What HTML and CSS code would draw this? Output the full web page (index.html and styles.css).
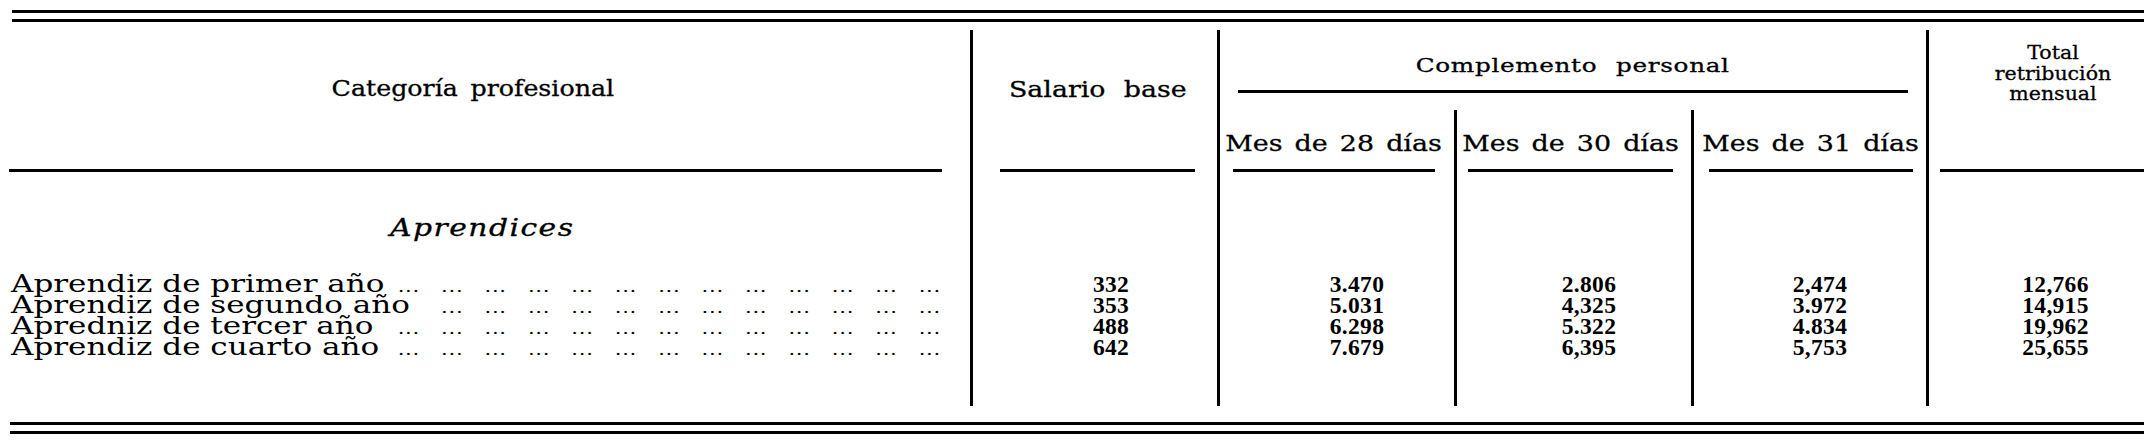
FILE: index.html
```html
<!DOCTYPE html>
<html lang="es">
<head>
<meta charset="utf-8">
<title>Aprendices</title>
<link rel="stylesheet" href="styles.css">
</head>
<body>
<div class="page">
  <div class="double-rule rule-top"></div>
  <div class="table">
    <div class="cell h-cat"><div class="htext"><span class="tx sx-cat">Categoría profesional</span></div><div class="rule"></div></div>
    <div class="cell vl h-sal"><div class="htext"><span class="tx sx-sal">Salario base</span></div><div class="rule"></div></div>
    <div class="cell vl h-comp"><div class="htext"><span class="tx sx-comp">Complemento personal</span></div><div class="rule"></div></div>
    <div class="cell vl h-tot"><div class="htext tot-lines"><span class="tx sx-tot">Total<br>retribución<br>mensual</span></div><div class="rule"></div></div>
    <div class="cell vl h-m h-m28"><div class="htext"><span class="tx sx-mes">Mes de 28 días</span></div><div class="rule"></div></div>
    <div class="cell vl h-m h-m30"><div class="htext"><span class="tx sx-mes">Mes de 30 días</span></div><div class="rule"></div></div>
    <div class="cell vl h-m h-m31"><div class="htext"><span class="tx sx-mes">Mes de 31 días</span></div><div class="rule"></div></div>

    <div class="cell b-cat">
      <div class="labels">
        <div class="sect">Aprendices</div>
        <div class="row"><span class="lbl">Aprendiz de primer año</span><span class="dots">... ... ... ... ... ... ... ... ... ... ... ... ...</span></div>
        <div class="row"><span class="lbl">Aprendiz de segundo año</span><span class="dots">... ... ... ... ... ... ... ... ... ... ... ...</span></div>
        <div class="row"><span class="lbl">Apredniz de tercer año</span><span class="dots">... ... ... ... ... ... ... ... ... ... ... ... ...</span></div>
        <div class="row"><span class="lbl">Aprendiz de cuarto año</span><span class="dots">... ... ... ... ... ... ... ... ... ... ... ... ...</span></div>
      </div>
    </div>
    <div class="cell vl num n2"><div class="vals"><div class="v">332</div><div class="v">353</div><div class="v">488</div><div class="v">642</div></div></div>
    <div class="cell vl num n3"><div class="vals"><div class="v">3.470</div><div class="v">5.031</div><div class="v">6.298</div><div class="v">7.679</div></div></div>
    <div class="cell vl num n4"><div class="vals"><div class="v">2.806</div><div class="v">4,325</div><div class="v">5.322</div><div class="v">6,395</div></div></div>
    <div class="cell vl num n5"><div class="vals"><div class="v">2,474</div><div class="v">3.972</div><div class="v">4.834</div><div class="v">5,753</div></div></div>
    <div class="cell vl num n6"><div class="vals"><div class="v">12,766</div><div class="v">14,915</div><div class="v">19,962</div><div class="v">25,655</div></div></div>
  </div>
  <div class="double-rule rule-bottom"></div>
</div>
</body>
</html>
```

FILE: styles.css
```css
html, body {
  margin: 0;
  padding: 0;
  background: #ffffff;
  color: #000000;
  font-family: "DejaVu Serif", "Liberation Serif", serif;
}

.page {
  width: 2135px;
  padding: 10px 9px 0 9px;
}

.double-rule {
  height: 6px;
  border-top: 3px solid #000;
  border-bottom: 3px solid #000;
}

.rule-top {
  margin-left: 3px;
}

.rule-bottom {
  margin-top: 16px;
  margin-left: 1px;
}

.table {
  display: grid;
  grid-template-columns: 961px 247px 237px 237px 235px 218px;
  grid-template-rows: 80px 66px 230px;
  margin-top: 8px;
}

.cell {
  display: flex;
  flex-direction: column;
  box-sizing: border-box;
  min-width: 0;
}

.vl {
  border-left: 3px solid #000;
}

.rule {
  margin-top: auto;
  border-top: 3px solid #000;
}

.htext {
  text-align: center;
  white-space: nowrap;
  font-size: 22px;
  line-height: 26px;
  -webkit-text-stroke: 0.3px #000;
}

.tx {
  display: inline-block;
  transform: scaleX(var(--sx, 1));
}

.sx-cat { --sx: 1.15; word-spacing: 4px; }
.sx-sal { --sx: 1.22; word-spacing: 8px; }
.sx-comp { --sx: 1.3; word-spacing: 8px; letter-spacing: 0.5px; }
.sx-mes { --sx: 1.17; word-spacing: 3px; }
.sx-tot { --sx: 1.08; }

.h-cat {
  grid-column: 1;
  grid-row: 1 / 3;
  padding: 46px 28px 4px 0;
}

.h-cat .htext {
  padding-right: 6px;
}

.h-sal {
  grid-column: 2;
  grid-row: 1 / 3;
  padding: 47px 22px 4px 27px;
}

.h-comp {
  grid-column: 3 / 6;
  grid-row: 1;
  padding: 23px 18px 17px 18px;
}

.h-comp .htext {
  font-size: 19px;
  line-height: 24px;
}

.h-tot {
  grid-column: 6;
  grid-row: 1 / 3;
  padding: 12px 0 4px 11px;
}

.tot-lines {
  font-size: 19px;
  line-height: 20.5px;
  padding-left: 22px;
}

.h-m {
  grid-row: 2;
  padding-top: 20px;
  padding-bottom: 4px;
}

.h-m .htext {
  font-size: 23px;
}

.h-m28 { grid-column: 3; padding-left: 13px; padding-right: 19px; }
.h-m30 { grid-column: 4; padding-left: 11px; padding-right: 18px; }
.h-m31 { grid-column: 5; padding-left: 15px; padding-right: 13px; }

.b-cat {
  grid-column: 1;
  grid-row: 3;
  padding: 37px 0 0 2px;
}

.labels {
  width: 750px;
  transform: scaleX(1.24);
  transform-origin: left top;
}

.sect {
  height: 30px;
  margin-bottom: 30px;
  padding-left: 10px;
  font-size: 24px;
  line-height: 30px;
  font-style: italic;
  letter-spacing: 1.2px;
  text-align: center;
  -webkit-text-stroke: 0.3px #000;
}

.row {
  display: flex;
  align-items: flex-start;
  height: 21px;
  line-height: 21px;
}

.lbl {
  font-size: 25px;
  white-space: nowrap;
}

.dots {
  margin-left: auto;
  white-space: nowrap;
  font-size: 17px;
  letter-spacing: 0.6px;
  word-spacing: 11px;
  padding-top: 2.75px;
}

.num {
  grid-row: 3;
  padding-top: 97.75px;
  font-family: "Liberation Serif", "DejaVu Serif", serif;
  font-weight: bold;
  font-size: 23.5px;
  line-height: 21px;
  letter-spacing: 0.3px;
}

.v {
  text-align: center;
  height: 21px;
}

.n2 { grid-column: 2; padding-left: 32px; }
.n3 { grid-column: 3; padding-left: 40px; }
.n4 { grid-column: 4; padding-left: 30px; }
.n5 { grid-column: 5; padding-left: 20px; }
.n6 { grid-column: 6; padding-left: 38px; }
```
